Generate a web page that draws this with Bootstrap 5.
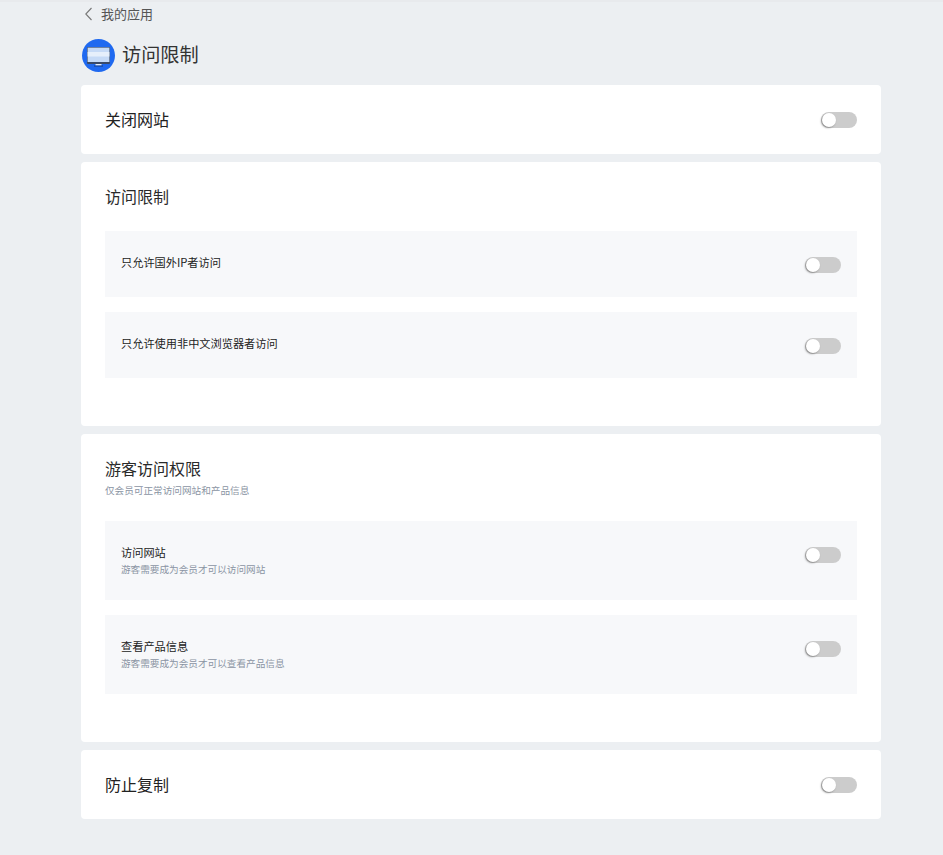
<!DOCTYPE html>
<html lang="zh">
<head>
<meta charset="utf-8">
<title>访问限制</title>
<link href="https://cdn.jsdelivr.net/npm/bootstrap@5.3.0/dist/css/bootstrap.min.css" rel="stylesheet">
<style>
body{background:#eceff2;font-family:"Noto Sans CJK SC","Liberation Sans",sans-serif;color:#333;height:855px;overflow:hidden;border-top:2px solid #e8eaed}
.pg{width:800px;margin-left:81px}
.crumb{height:24px;font-size:13px;color:#555;padding-left:3px;gap:8px}
.head{height:31px;margin-top:14px;margin-bottom:14px;gap:7px;font-size:19.2px;margin-left:1px;color:#333}
.head span{padding-bottom:2px}
.logo{width:33px;height:33px;flex:none}
.pane{background:#fff;border-radius:4px;padding:0 24px;margin-bottom:8px}
.bar{height:69px;font-size:16px;color:#222}
.bar span{padding-bottom:2px}
.sec{padding-top:23px}
.sect{font-size:16px;line-height:22px;color:#2a2a2a}
.subt{font-size:9.65px;line-height:14px;color:#8a94a3;margin-top:4px;margin-bottom:24px}
.rowx{background:#f7f8fa;padding:0 16px;margin-bottom:15px;display:flex;justify-content:space-between;align-items:flex-start}
.nm{font-size:11.2px;line-height:16px;color:#222}
.ds{font-size:9.65px;line-height:13px;color:#8a94a3;margin-top:3px}
.tog{width:36px;height:16px;border-radius:8px;background:#ccc;position:relative;flex:none}
.tog::before{content:"";position:absolute;left:1px;top:1px;width:14px;height:14px;border-radius:50%;background:#fff;box-shadow:-1px 1px 2px rgba(0,0,0,.35)}
.rowx .tog{margin-top:26px}
.r1{height:66px}
.r2{height:79px}
.r1 .nm{margin-top:23px}
.r2 .nm{margin-top:23px}
.tail{height:33px}
.sect-a{margin-bottom:24px}
</style>
</head>
<body>
<div class="pg">
  <div class="crumb d-flex align-items-center">
    <svg width="9" height="14" viewBox="0 0 9 14" fill="none"><path d="M7.5 1 1.8 7l5.7 6" stroke="#777" stroke-width="1.1"/></svg>
    <span>我的应用</span>
  </div>
  <div class="head d-flex align-items-center">
    <svg class="logo" viewBox="0 0 33 33"><circle cx="16.5" cy="16.5" r="16.5" fill="#1f69f0"/><rect x="5" y="8" width="23" height="17" rx="1" fill="#3a4a68"/><rect x="5.6" y="8.6" width="21.8" height="14.4" fill="#c6daf6"/><rect x="5.6" y="13" width="21.8" height="4.5" fill="#e6effb"/><rect x="13.5" y="25" width="6" height="1.6" fill="#e3ebf8"/><rect x="12" y="26.6" width="9" height=".8" fill="#12306a"/></svg>
    <span>访问限制</span>
  </div>
  <div class="pane bar d-flex justify-content-between align-items-center"><span>关闭网站</span><div class="tog"></div></div>
  <div class="pane sec">
    <div class="sect sect-a">访问限制</div>
    <div class="rowx r1"><div class="nm">只允许国外IP者访问</div><div class="tog"></div></div>
    <div class="rowx r1"><div class="nm">只允许使用非中文浏览器者访问</div><div class="tog"></div></div>
    <div class="tail"></div>
  </div>
  <div class="pane sec">
    <div class="sect">游客访问权限</div>
    <div class="subt">仅会员可正常访问网站和产品信息</div>
    <div class="rowx r2"><div><div class="nm">访问网站</div><div class="ds">游客需要成为会员才可以访问网站</div></div><div class="tog"></div></div>
    <div class="rowx r2"><div><div class="nm">查看产品信息</div><div class="ds">游客需要成为会员才可以查看产品信息</div></div><div class="tog"></div></div>
    <div class="tail"></div>
  </div>
  <div class="pane bar d-flex justify-content-between align-items-center"><span>防止复制</span><div class="tog"></div></div>
</div>
<script src="https://cdn.jsdelivr.net/npm/bootstrap@5.3.0/dist/js/bootstrap.bundle.min.js"></script>
</body>
</html>
